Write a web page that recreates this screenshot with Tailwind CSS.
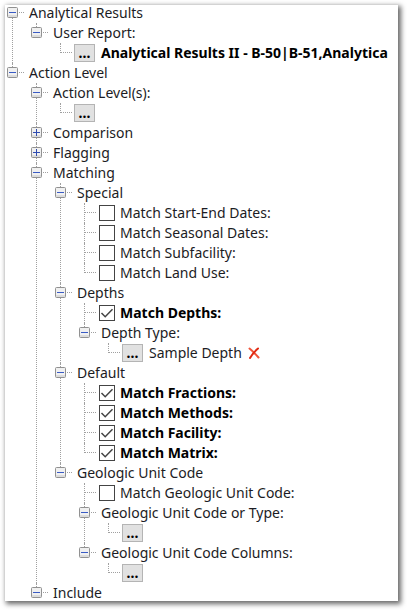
<!DOCTYPE html>
<html lang="en">
<head>
<meta charset="utf-8">
<meta name="viewport" content="width=device-width, initial-scale=1">
<title>Report options</title>
<script src="https://cdn.jsdelivr.net/npm/@tailwindcss/browser@4"></script>
</head>
<body class="bg-white">
<svg class="hidden">
  <symbol id="minus" viewBox="0 0 11 12"><rect x=".5" y=".5" width="10" height="10" rx="1" fill="#f0f0f0" stroke="#919191"/><path d="M1 8h9v2H1z" fill="#dcdcdc"/><path d="M2 5h7v1H2z" fill="#3a5bc4"/></symbol>
  <symbol id="plus" viewBox="0 0 11 12"><rect x=".5" y=".5" width="10" height="10" rx="1" fill="#f0f0f0" stroke="#919191"/><path d="M1 8h9v2H1z" fill="#dcdcdc"/><path d="M2 5h3V2h1v3h3v1H6v3H5V6H2z" fill="#2f4cb0"/></symbol>
  <symbol id="tick" viewBox="0 0 16 16"><path d="M2.500 8l3.700 3.700L13.500 4.300" fill="none" stroke="#444" stroke-width="1.500"/></symbol>
</svg>
<main class="mt-[5px] mr-[9px] mb-[9px] ml-[5px] flow-root overflow-x-clip bg-white shadow-[2px_2px_5px_1px_rgba(0,0,0,0.6)]">
<ul class="-my-0.5 pl-0.5 font-['Noto_Sans',sans-serif] text-[14px] leading-4 whitespace-nowrap text-[#1c1c24]
  [&_ul]:pl-6
  [&_li]:relative
  [&_li]:before:absolute [&_li]:before:left-[5px] [&_li]:before:top-0 [&_li]:before:bottom-0 [&_li]:before:border-l [&_li]:before:border-dotted [&_li]:before:border-[#a0a0a0]
  [&_li:last-child]:before:bottom-auto [&_li:last-child]:before:h-[10px]
  [&>li:first-child]:before:top-[10px]
  [&_li]:after:absolute [&_li]:after:left-[5px] [&_li]:after:top-[9px] [&_li]:after:w-3 [&_li]:after:border-t [&_li]:after:border-dotted [&_li]:after:border-[#a0a0a0]
  [&_div]:flex [&_div]:h-5 [&_div]:items-center
  [&_.branch]:gap-[11px] [&_.branch>button]:relative [&_.branch>button]:z-10 [&_.branch_svg]:h-3 [&_.branch_svg]:w-[11px]
  [&_.pick]:gap-[6px] [&_.pick]:pl-[19px] [&_.pick>button]:shrink-0 [&_.pick>button:first-child]:h-[18px] [&_.pick>button:first-child]:w-[21px] [&_.pick>button:first-child]:border [&_.pick>button:first-child]:border-[#b4b4b4] [&_.pick>button:first-child]:bg-[#e1e1e1] [&_.pick>button:first-child]:font-bold [&_.pick>button:first-child]:text-black
  [&_label]:relative [&_label]:flex [&_label]:h-5 [&_label]:items-center [&_label]:gap-[5px] [&_label]:pl-5
  [&_input]:size-4 [&_input]:appearance-none [&_input]:border [&_input]:border-[#444] [&_input]:bg-white
  [&_label>svg]:absolute [&_label>svg]:left-5 [&_label>svg]:size-4 [&_label>svg]:pointer-events-none [&_label>svg]:invisible [&_input:checked+svg]:visible
  [&_b]:text-black">
  <li>
    <div class="branch"><button aria-label="Collapse"><svg><use href="#minus"/></svg></button><span>Analytical Results</span></div>
    <ul>
      <li>
        <div class="branch"><button aria-label="Collapse"><svg><use href="#minus"/></svg></button><span>User Report:</span></div>
        <ul><li><div class="pick"><button aria-label="Choose user report">...</button><b>Analytical Results II - B-50|B-51,Analytica</b></div></li></ul>
      </li>
    </ul>
  </li>
  <li>
    <div class="branch"><button aria-label="Collapse"><svg><use href="#minus"/></svg></button><span>Action Level</span></div>
    <ul>
      <li>
        <div class="branch"><button aria-label="Collapse"><svg><use href="#minus"/></svg></button><span>Action Level(s):</span></div>
        <ul><li><div class="pick"><button aria-label="Choose action levels">...</button></div></li></ul>
      </li>
      <li><div class="branch"><button aria-label="Expand"><svg><use href="#plus"/></svg></button><span>Comparison</span></div></li>
      <li><div class="branch"><button aria-label="Expand"><svg><use href="#plus"/></svg></button><span>Flagging</span></div></li>
      <li>
        <div class="branch"><button aria-label="Collapse"><svg><use href="#minus"/></svg></button><span>Matching</span></div>
        <ul>
          <li>
            <div class="branch"><button aria-label="Collapse"><svg><use href="#minus"/></svg></button><span>Special</span></div>
            <ul>
              <li><label><input type="checkbox"><svg><use href="#tick"/></svg><span>Match Start-End Dates:</span></label></li>
              <li><label><input type="checkbox"><svg><use href="#tick"/></svg><span>Match Seasonal Dates:</span></label></li>
              <li><label><input type="checkbox"><svg><use href="#tick"/></svg><span>Match Subfacility:</span></label></li>
              <li><label><input type="checkbox"><svg><use href="#tick"/></svg><span>Match Land Use:</span></label></li>
            </ul>
          </li>
          <li>
            <div class="branch"><button aria-label="Collapse"><svg><use href="#minus"/></svg></button><span>Depths</span></div>
            <ul>
              <li><label><input type="checkbox" checked><svg><use href="#tick"/></svg><b>Match Depths:</b></label></li>
              <li>
                <div class="branch"><button aria-label="Collapse"><svg><use href="#minus"/></svg></button><span>Depth Type:</span></div>
                <ul><li><div class="pick"><button aria-label="Choose depth type">...</button><span>Sample Depth</span><button aria-label="Clear depth type"><svg class="h-3 w-3" viewBox="0 0 12 12" fill="none" stroke-linecap="round"><path d="M1.500 1.500C4 3.500 8 7.500 10.500 10.500" stroke="#f0553a" stroke-width="2"/><path d="M10 1.500C7 4 4 7.500 2 11" stroke="#e02a12" stroke-width="2"/></svg></button></div></li></ul>
              </li>
            </ul>
          </li>
          <li>
            <div class="branch"><button aria-label="Collapse"><svg><use href="#minus"/></svg></button><span>Default</span></div>
            <ul>
              <li><label><input type="checkbox" checked><svg><use href="#tick"/></svg><b>Match Fractions:</b></label></li>
              <li><label><input type="checkbox" checked><svg><use href="#tick"/></svg><b>Match Methods:</b></label></li>
              <li><label><input type="checkbox" checked><svg><use href="#tick"/></svg><b>Match Facility:</b></label></li>
              <li><label><input type="checkbox" checked><svg><use href="#tick"/></svg><b>Match Matrix:</b></label></li>
            </ul>
          </li>
          <li>
            <div class="branch"><button aria-label="Collapse"><svg><use href="#minus"/></svg></button><span>Geologic Unit Code</span></div>
            <ul>
              <li><label><input type="checkbox"><svg><use href="#tick"/></svg><span>Match Geologic Unit Code:</span></label></li>
              <li>
                <div class="branch"><button aria-label="Collapse"><svg><use href="#minus"/></svg></button><span>Geologic Unit Code or Type:</span></div>
                <ul><li><div class="pick"><button aria-label="Choose geologic unit code or type">...</button></div></li></ul>
              </li>
              <li>
                <div class="branch"><button aria-label="Collapse"><svg><use href="#minus"/></svg></button><span>Geologic Unit Code Columns:</span></div>
                <ul><li><div class="pick"><button aria-label="Choose geologic unit code columns">...</button></div></li></ul>
              </li>
            </ul>
          </li>
        </ul>
      </li>
      <li><div class="branch"><button aria-label="Collapse"><svg><use href="#minus"/></svg></button><span>Include</span></div></li>
    </ul>
  </li>
</ul>
</main>
</body>
</html>
